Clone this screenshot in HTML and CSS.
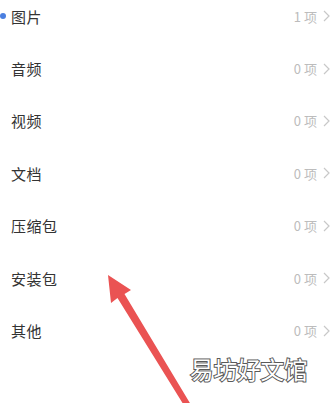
FILE: index.html
```html
<!DOCTYPE html>
<html lang="zh">
<head>
<meta charset="utf-8">
<link rel="stylesheet" href="styles.css">
</head>
<body>
<div class="page">
  <ul class="list">
    <li class="row active"><span class="dot"></span><span class="label">图片</span><span class="count">1 项</span><svg class="chev" viewBox="0 0 7 12"><path d="M1 1 L6 6 L1 11" /></svg></li>
    <li class="row"><span class="label">音频</span><span class="count">0 项</span><svg class="chev" viewBox="0 0 7 12"><path d="M1 1 L6 6 L1 11" /></svg></li>
    <li class="row"><span class="label">视频</span><span class="count">0 项</span><svg class="chev" viewBox="0 0 7 12"><path d="M1 1 L6 6 L1 11" /></svg></li>
    <li class="row"><span class="label">文档</span><span class="count">0 项</span><svg class="chev" viewBox="0 0 7 12"><path d="M1 1 L6 6 L1 11" /></svg></li>
    <li class="row"><span class="label">压缩包</span><span class="count">0 项</span><svg class="chev" viewBox="0 0 7 12"><path d="M1 1 L6 6 L1 11" /></svg></li>
    <li class="row"><span class="label">安装包</span><span class="count">0 项</span><svg class="chev" viewBox="0 0 7 12"><path d="M1 1 L6 6 L1 11" /></svg></li>
    <li class="row"><span class="label">其他</span><span class="count">0 项</span><svg class="chev" viewBox="0 0 7 12"><path d="M1 1 L6 6 L1 11" /></svg></li>
  </ul>
  <svg class="arrow" viewBox="0 0 336 403" width="336" height="403">
    <polygon points="108,275 131,290 124.5,294 190.5,404 185,407 117.5,298 111,303" />
  </svg>
  <div class="watermark">易坊好文馆</div>
</div>
</body>
</html>
```

FILE: styles.css
```css
html, body {
  margin: 0;
  padding: 0;
  background: #ffffff;
}
body {
  font-family: "Noto Sans CJK SC", "Noto Sans", sans-serif;
  width: 336px;
  height: 403px;
  overflow: hidden;
}
.page {
  position: relative;
  width: 336px;
  height: 403px;
  overflow: hidden;
}
.list {
  list-style: none;
  margin: -10px 0 0 0;
  padding: 0;
}
.row {
  position: relative;
  display: flex;
  align-items: center;
  height: 52.4px;
  padding: 0 6px 0 11px;
}
.dot {
  position: absolute;
  left: 0;
  top: 50%;
  width: 6px;
  height: 6px;
  margin-top: -3px;
  border-radius: 50%;
  background: #4a7fe0;
}
.label {
  flex: 1;
  font-size: 15px;
  color: #333333;
  letter-spacing: 0.5px;
}
.count {
  font-size: 13px;
  color: #bcbcbc;
  margin-right: 6px;
}
.chev {
  width: 7px;
  height: 12px;
  fill: none;
  stroke: #c8c8c8;
  stroke-width: 1.2;
}
.arrow {
  position: absolute;
  left: 0;
  top: 0;
}
.arrow polygon {
  fill: #ea5353;
}
.watermark {
  position: absolute;
  left: 190px;
  top: 352px;
  font-size: 23.5px;
  color: #ffffff;
  -webkit-text-stroke: 2px #5a5a5a;
  paint-order: stroke fill;
  letter-spacing: 0;
  line-height: 34px;
}
```
